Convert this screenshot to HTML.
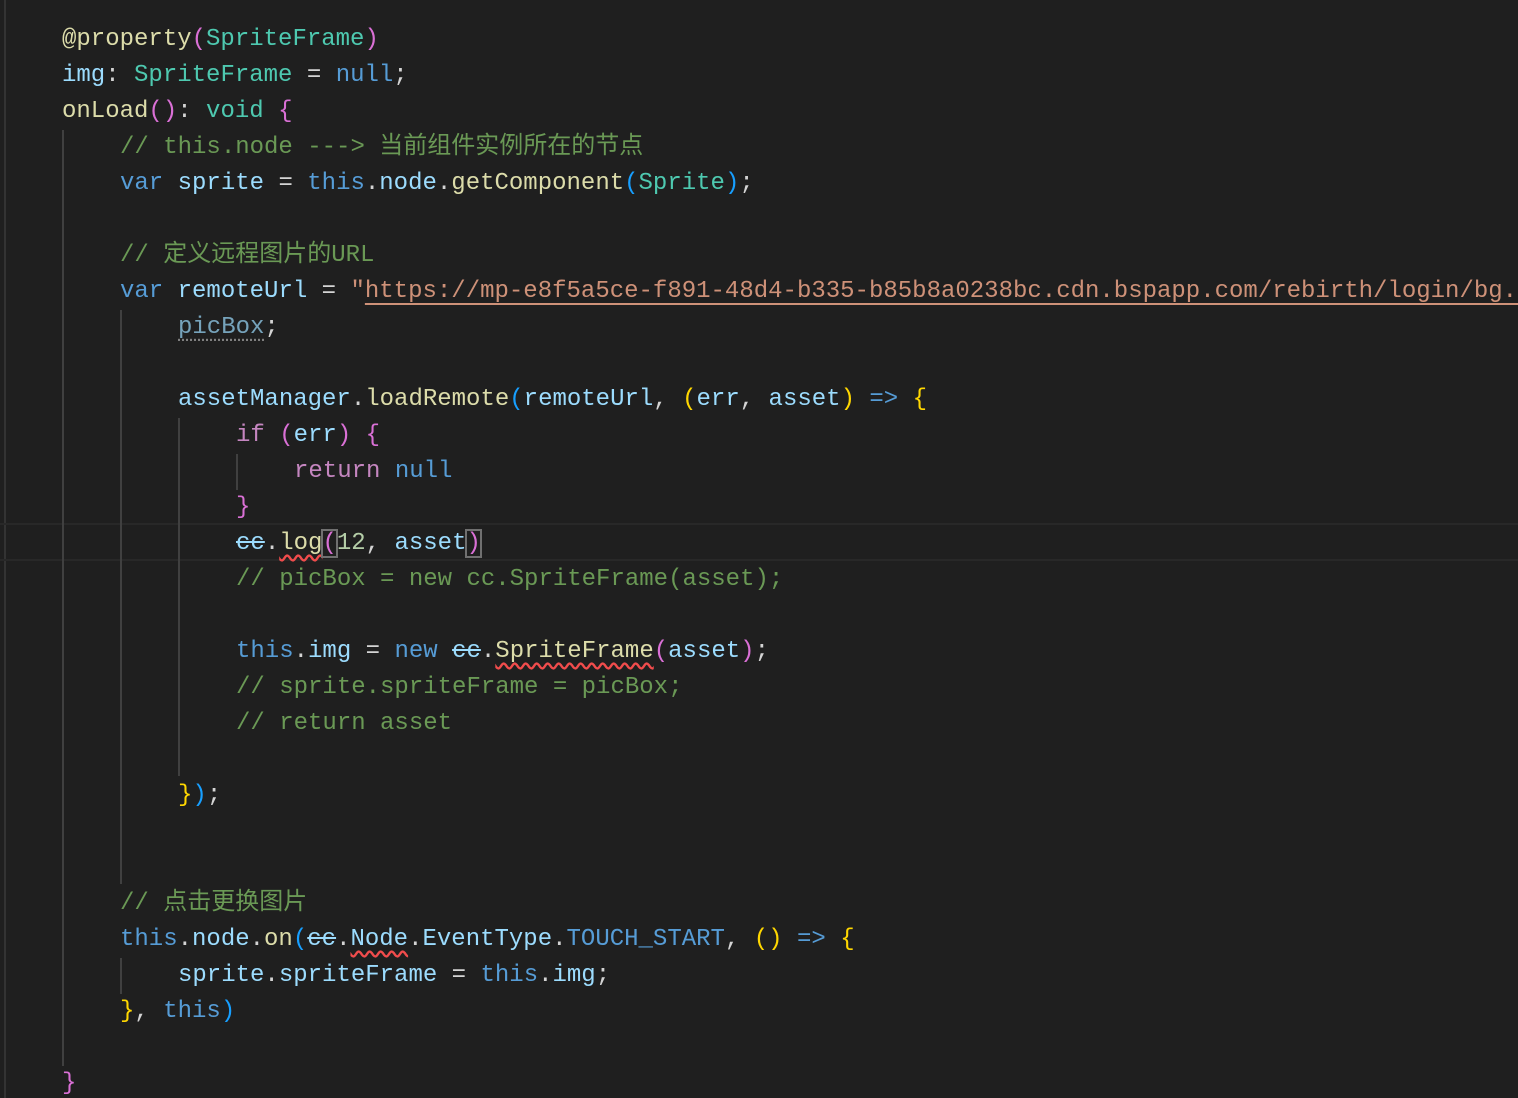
<!DOCTYPE html>
<html><head><meta charset="utf-8"><style>
html,body{margin:0;padding:0;background:#1f1f1f;width:1518px;height:1098px;overflow:hidden}
body{position:relative;font-family:"Liberation Mono","Noto Sans CJK SC",monospace;font-size:24px;color:#d4d4d4}
.l{position:absolute;left:0;height:36px;line-height:36px;white-space:pre}
.g{position:absolute;width:2px;background:#404040}
.c{color:#6a9955}.k{color:#569cd6}.v{color:#9cdcfe}.f{color:#dcdcaa}.t{color:#4ec9b0}.s{color:#ce9178}.p{color:#c586c0}.n{color:#b5cea8}
.y{color:#ffd700}.m{color:#da70d6}.b{color:#179fff}
.cj{letter-spacing:0}
.st{text-decoration:line-through}
.w{text-decoration:underline wavy #f14c4c;text-decoration-skip-ink:none;text-underline-offset:5px}
.u{text-decoration:underline #ce9178 2px;text-underline-offset:6px}
.bx{outline:2px solid #707070;outline-offset:-1px}
</style></head><body>
<div style="position:absolute;left:4px;top:0;width:2px;height:1098px;background:#333"></div>
<div style="position:absolute;left:0;top:523px;width:1518px;height:34px;border-top:2px solid #282828;border-bottom:2px solid #282828"></div>
<div class="g" style="left:62px;top:130px;height:936px"></div>
<div class="g" style="left:120px;top:310px;height:574px"></div>
<div class="g" style="left:178px;top:418px;height:358px"></div>
<div class="g" style="left:236px;top:454px;height:36px"></div>
<div class="g" style="left:120px;top:958px;height:36px"></div>

<div class="l" style="top:22px;left:62px"><span class="f">@property</span><span class="m">(</span><span class="t">SpriteFrame</span><span class="m">)</span></div>
<div class="l" style="top:58px;left:62px"><span class="v">img</span>: <span class="t">SpriteFrame</span> = <span class="k">null</span>;</div>
<div class="l" style="top:94px;left:62px"><span class="f">onLoad</span><span class="m">()</span>: <span class="t">void</span> <span class="m">{</span></div>
<div class="l" style="top:130px;left:120px"><span class="c">// this.node ---&gt; <span class="cj">当前组件实例所在的节点</span></span></div>
<div class="l" style="top:166px;left:120px"><span class="k">var</span> <span class="v">sprite</span> = <span class="k">this</span>.<span class="v">node</span>.<span class="f">getComponent</span><span class="b">(</span><span class="t">Sprite</span><span class="b">)</span>;</div>
<div class="l" style="top:238px;left:120px"><span class="c">// <span class="cj">定义远程图片的</span>URL</span></div>
<div class="l" style="top:274px;left:120px"><span class="k">var</span> <span class="v">remoteUrl</span> = <span class="s">"<span class="u">https://mp-e8f5a5ce-f891-48d4-b335-b85b8a0238bc.cdn.bspapp.com/rebirth/login/bg.png</span>"</span></div>
<div class="l" style="top:310px;left:178px"><span class="v" style="opacity:.7;text-decoration:underline dotted #aaa;text-underline-offset:6px">picBox</span>;</div>
<div class="l" style="top:382px;left:178px"><span class="v">assetManager</span>.<span class="f">loadRemote</span><span class="b">(</span><span class="v">remoteUrl</span>, <span class="y">(</span><span class="v">err</span>, <span class="v">asset</span><span class="y">)</span> <span class="k">=&gt;</span> <span class="y">{</span></div>
<div class="l" style="top:418px;left:236px"><span class="p">if</span> <span class="m">(</span><span class="v">err</span><span class="m">)</span> <span class="m">{</span></div>
<div class="l" style="top:454px;left:294px"><span class="p">return</span> <span class="k">null</span></div>
<div class="l" style="top:490px;left:236px"><span class="m">}</span></div>
<div class="l" style="top:526px;left:236px"><span class="v st">cc</span>.<span class="f w">log</span><span class="m bx">(</span><span class="n">12</span>, <span class="v">asset</span><span class="m bx">)</span></div>
<div class="l" style="top:562px;left:236px"><span class="c">// picBox = new cc.SpriteFrame(asset);</span></div>
<div class="l" style="top:634px;left:236px"><span class="k">this</span>.<span class="v">img</span> = <span class="k">new</span> <span class="v st">cc</span>.<span class="f w">SpriteFrame</span><span class="m">(</span><span class="v">asset</span><span class="m">)</span>;</div>
<div class="l" style="top:670px;left:236px"><span class="c">// sprite.spriteFrame = picBox;</span></div>
<div class="l" style="top:706px;left:236px"><span class="c">// return asset</span></div>
<div class="l" style="top:778px;left:178px"><span class="y">}</span><span class="b">)</span>;</div>
<div class="l" style="top:886px;left:120px"><span class="c">// <span class="cj">点击更换图片</span></span></div>
<div class="l" style="top:922px;left:120px"><span class="k">this</span>.<span class="v">node</span>.<span class="f">on</span><span class="b">(</span><span class="v st">cc</span>.<span class="v w">Node</span>.<span class="v">EventType</span>.<span class="k">TOUCH_START</span>, <span class="y">()</span> <span class="k">=&gt;</span> <span class="y">{</span></div>
<div class="l" style="top:958px;left:178px"><span class="v">sprite</span>.<span class="v">spriteFrame</span> = <span class="k">this</span>.<span class="v">img</span>;</div>
<div class="l" style="top:994px;left:120px"><span class="y">}</span>, <span class="k">this</span><span class="b">)</span></div>
<div class="l" style="top:1066px;left:62px"><span class="m">}</span></div>
</body></html>
